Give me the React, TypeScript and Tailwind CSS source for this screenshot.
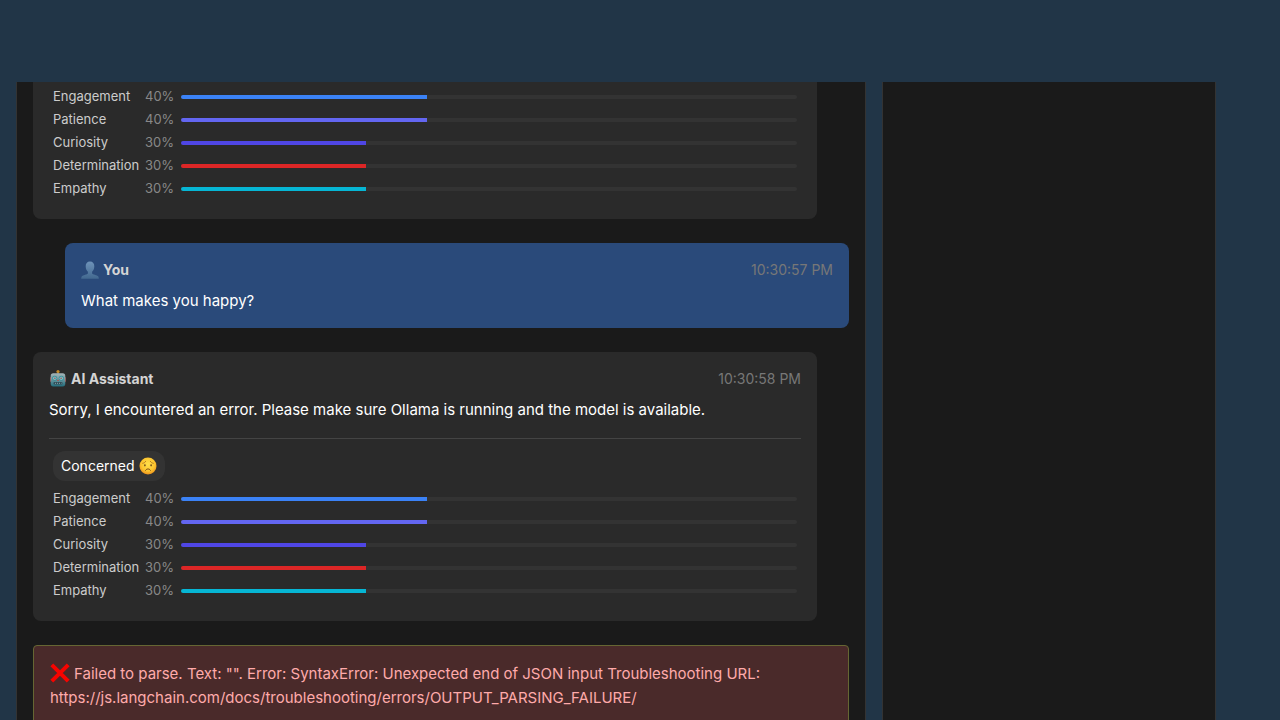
import type { ReactNode } from "react";

type Trait = { name: string; value: number; color: string };

const traits: Trait[] = [
  { name: "Engagement", value: 40, color: "bg-[#3b82f6]" },
  { name: "Patience", value: 40, color: "bg-[#6366f1]" },
  { name: "Curiosity", value: 30, color: "bg-[#4f46e5]" },
  { name: "Determination", value: 30, color: "bg-[#dc2626]" },
  { name: "Empathy", value: 30, color: "bg-[#06b6d4]" },
];

function PersonIcon() {
  return (
    <svg width="18" height="18" viewBox="0 0 18 18" aria-hidden="true">
      <defs>
        <linearGradient id="person" x1="0" y1="0" x2="0" y2="1">
          <stop offset="0" stopColor="#6e93b9" />
          <stop offset="1" stopColor="#42688f" />
        </linearGradient>
      </defs>
      <path
        d="M9 .5c2.800 0 4.500 2 4.300 5-.1 2.300-1 4.300-2.200 5.300v1.700c.3 1 5 1.500 6.200 3.100.3.500.5 1.300.5 2.100H.2c0-.8.2-1.600.5-2.100 1.200-1.600 5.900-2.100 6.200-3.100v-1.700c-1.200-1-2.100-3-2.200-5.300C4.500 2.500 6.200.5 9 .5z"
        fill="url(#person)"
      />
    </svg>
  );
}

function RobotIcon() {
  return (
    <svg width="18" height="18" viewBox="0 0 18 18" aria-hidden="true">
      <defs>
        <linearGradient id="robot" x1="0" y1="0" x2="0" y2="1">
          <stop offset="0" stopColor="#a6b5b8" />
          <stop offset=".45" stopColor="#6f9aa2" />
          <stop offset="1" stopColor="#236d7c" />
        </linearGradient>
      </defs>
      <path d="M8 2.500h2v3H8z" fill="#50666e" />
      <circle cx="9" cy="1.600" r="1.600" fill="#c58b2b" />
      <rect x="1" y="7" width="2" height="5" rx="1" fill="#a34644" />
      <rect x="15" y="7" width="2" height="5" rx="1" fill="#a34644" />
      <path d="M4.200 3.300h9.600c1.600 0 2.500 1 2.500 2.600v7.900c0 1.600-.9 2.600-2.500 2.600H4.200c-1.600 0-2.500-1-2.500-2.600V5.900c0-1.600.9-2.600 2.500-2.600z" fill="url(#robot)" />
      <circle cx="5.700" cy="8.200" r="2.500" fill="#398993" />
      <circle cx="12.300" cy="8.200" r="2.500" fill="#398993" />
      <circle cx="5.700" cy="8.200" r="1.800" fill="#7fc0c6" />
      <circle cx="12.300" cy="8.200" r="1.800" fill="#7fc0c6" />
      <circle cx="5.900" cy="8.200" r=".8" fill="#a94d4c" />
      <circle cx="12.100" cy="8.200" r=".8" fill="#a94d4c" />
      <path d="M9 9.200l1 1.800H8z" fill="#a94d4c" />
      <rect x="4.500" y="12" width="9" height="2.600" rx="1" fill="#304d57" />
      <path d="M6 13.300h6.500" stroke="#8aa6ad" strokeWidth="1" strokeDasharray="1 1" />
    </svg>
  );
}

function WorriedIcon() {
  return (
    <svg width="18" height="18" viewBox="0 0 18 18" aria-hidden="true">
      <defs>
        <radialGradient id="face" cx=".5" cy=".4" r=".6">
          <stop offset="0" stopColor="#ffe04c" />
          <stop offset=".65" stopColor="#fcc52f" />
          <stop offset="1" stopColor="#ee931c" />
        </radialGradient>
      </defs>
      <circle cx="9" cy="9" r="8.500" fill="url(#face)" />
      <path d="M3.700 6.300c1.300-.2 2.300-.8 2.900-1.900M14.300 6.300c-1.300-.2-2.300-.8-2.900-1.900" fill="none" stroke="#a7691a" strokeWidth=".8" strokeLinecap="round" />
      <ellipse cx="5.900" cy="8.300" rx=".8" ry="1.100" fill="#65401a" />
      <ellipse cx="12.100" cy="8.300" rx=".8" ry="1.100" fill="#65401a" />
      <path d="M6.600 13.300c.6-.9 1.400-1.300 2.400-1.300s1.800.4 2.400 1.300" fill="none" stroke="#744719" strokeWidth="1" strokeLinecap="round" />
    </svg>
  );
}

function CrossIcon() {
  return (
    <svg className="mr-1 inline-block align-[-4px]" width="20" height="20" viewBox="0 0 20 20" role="img" aria-label="Error">
      <path d="M1.800 1.800l16.400 16.400M18.200 1.800L1.800 18.200" stroke="#f60400" strokeWidth="4" />
    </svg>
  );
}

function TraitList() {
  return (
    <div className="grid grid-cols-[84px_28px_1fr] items-center gap-x-2 px-1 text-[13px] leading-[23px]">
      {traits.map((t) => (
        <div key={t.name} className="contents">
          <span className="text-[#cccccc]">{t.name}</span>
          <span className="text-[#888888]">{t.value}%</span>
          <div
            role="meter"
            aria-label={t.name}
            aria-valuemin={0}
            aria-valuemax={100}
            aria-valuenow={t.value}
            className="h-1 overflow-hidden rounded-sm bg-[#333333]"
          >
            <div className={`h-full ${t.color}`} style={{ width: `${t.value}%` }} />
          </div>
        </div>
      ))}
    </div>
  );
}

function MessageHeader({ icon, author, time }: { icon: ReactNode; author: string; time: string }) {
  return (
    <header className="flex items-center justify-between text-sm leading-[22px]">
      <span className="flex items-center gap-1 font-bold text-[#d4d4d4]">
        {icon}
        {author}
      </span>
      <time className="text-[#777777]">{time}</time>
    </header>
  );
}

export default function App() {
  return (
    <div className="flex h-screen flex-col overflow-hidden bg-[#213547] font-['Inter','Liberation_Sans',sans-serif] text-white">
      <div className="h-[82px] shrink-0" />
      <div className="flex min-h-0 w-full max-w-[1232px] flex-1 gap-4 px-4">
        <main className="min-w-0 flex-1 overflow-hidden border-x border-[#333333] bg-[#1a1a1a] px-4">
          <div className="flex flex-col gap-6">
            <article className="mr-8 rounded-b-lg bg-[#2a2a2a] px-4 pt-[3px] pb-[19px]">
              <TraitList />
            </article>

            <article className="ml-8 rounded-lg bg-[#2a4a7a] p-4">
              <MessageHeader icon={<PersonIcon />} author="You" time="10:30:57 PM" />
              <p className="mt-2 text-[15px] leading-[23px]">What makes you happy?</p>
            </article>

            <article className="mr-8 rounded-lg bg-[#2a2a2a] px-4 pt-4 pb-[19px]">
              <MessageHeader icon={<RobotIcon />} author="AI Assistant" time="10:30:58 PM" />
              <p className="mt-2 text-[15px] leading-6">
                Sorry, I encountered an error. Please make sure Ollama is running and the model is available.
              </p>
              <div className="mt-4 border-t border-[#444444] pt-3">
                <div className="mx-1 mb-[6px] flex w-fit items-center gap-1 rounded-xl bg-[#333333] px-2 text-sm leading-[30px]">
                  Concerned
                  <WorriedIcon />
                </div>
                <TraitList />
              </div>
            </article>

            <div role="alert" className="rounded border border-[#666633] bg-[#4a2a2a] p-4 text-[15px] leading-6 text-[#ffaaaa]">
              <CrossIcon />
              Failed to parse. Text: "". Error: SyntaxError: Unexpected end of JSON input Troubleshooting URL:{" "}
              <span className="break-words">https://js.langchain.com/docs/troubleshooting/errors/OUTPUT_PARSING_FAILURE/</span>
            </div>
          </div>
        </main>
        <aside className="w-[334px] shrink-0 border-x border-[#333333] bg-[#1a1a1a]" />
      </div>
    </div>
  );
}
